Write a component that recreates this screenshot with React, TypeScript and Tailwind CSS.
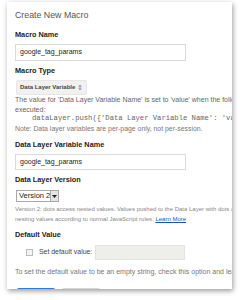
export default function App() {
  return (
    <div className="w-[240px] h-[300px] bg-white overflow-hidden font-['Liberation_Sans',Arial,sans-serif]">
      <div className="ml-[7px] mt-[2px] w-[225px] h-[287px] bg-white shadow-[1px_2px_5px_rgba(0,0,0,0.4)] overflow-hidden pl-[8px] text-[#333]">
        <div className="pt-[7px] text-[8.8px] leading-[12px] text-[#555]">Create New Macro</div>

        <div className="mt-[9px] text-[7.3px] font-bold leading-[10px] text-[#222]">Macro Name</div>
        <div className="mt-[4px] w-[171px] h-[17px] border border-[#d9d9d9] flex items-center px-[4px] text-[7px] text-[#222]">google_tag_params</div>

        <div className="mt-[5px] text-[7.3px] font-bold leading-[10px] text-[#222]">Macro Type</div>
        <div className="mt-[4px] ml-[1px] w-[71px] h-[15px] bg-[#f1f1f1] border border-[#e6e6e6] rounded-[2px] flex items-center justify-between px-[3px]">
          <span className="text-[6px] font-bold text-[#444] whitespace-nowrap">Data Layer Variable</span>
          <span className="text-[7px] leading-none text-[#777]">⇕</span>
        </div>
        <div className="text-[7px] leading-[9.5px] text-[#666] whitespace-nowrap">
          The value for 'Data Layer Variable Name' is set to 'value' when the following code is
        </div>
        <div className="text-[7px] leading-[9.5px] text-[#666]">executed:</div>
        <div className="pl-[17px] text-[7.2px] leading-[9.5px] text-[#666] whitespace-nowrap font-['Liberation_Mono',monospace]">
          dataLayer.push({"{"}'Data Layer Variable Name': 'value'{"}"});
        </div>
        <div className="text-[6.9px] leading-[9.5px] text-[#777] whitespace-nowrap">
          Note: Data layer variables are per-page only, not per-session.
        </div>

        <div className="mt-[7px] text-[7.3px] font-bold leading-[10px] text-[#222]">Data Layer Variable Name</div>
        <div className="mt-[4px] w-[171px] h-[16px] border border-[#d9d9d9] flex items-center px-[4px] text-[7px] text-[#222]">google_tag_params</div>

        <div className="mt-[5px] text-[7.3px] font-bold leading-[10px] text-[#222]">Data Layer Version</div>
        <div className="mt-[5px] ml-[1px] w-[43px] h-[12px] border border-[#a9a9a9] flex items-center">
          <span className="flex-1 pl-[2px] text-[7.5px] leading-none text-[#222] whitespace-nowrap">Version 2</span>
          <span className="w-[9px] h-[10px] bg-[#e4e4e4] border-l border-[#a9a9a9] flex items-center justify-center">
            <svg width="5" height="3" viewBox="0 0 5 3"><path d="M0 0h5L2.5 3z" fill="#222" /></svg>
          </span>
        </div>
        <div className="mt-[2px] text-[6px] leading-[10px] text-[#888] whitespace-nowrap">
          Version 2: dots access nested values. Values pushed to the Data Layer with dots are
        </div>
        <div className="text-[6px] leading-[10px] text-[#888] whitespace-nowrap">
          nesting values according to normal JavaScript rules. <span className="text-[#1155cc] underline">Learn More</span>
        </div>

        <div className="mt-[6px] text-[7.3px] font-bold leading-[10px] text-[#222]">Default Value</div>
        <div className="mt-[5px] h-[15px] flex items-center">
          <span className="ml-[11px] w-[7px] h-[7px] border border-[#bbb] bg-[#f3f3f3]" />
          <span className="ml-[6px] text-[6.9px] text-[#444] whitespace-nowrap">Set default value:</span>
          <span className="ml-[3px] w-[90px] h-[15px] bg-[#eeeeea] border border-[#e4e4de]" />
        </div>
        <div className="mt-[7px] text-[7px] leading-[10px] text-[#777] whitespace-nowrap">
          To set the default value to be an empty string, check this option and leave it blank.
        </div>

        <div className="mt-[11px] ml-[2px] flex gap-[7px]">
          <span className="w-[38px] h-[14px] bg-[#4d90fe] border-t border-[#3079ed] rounded-[2px]" />
          <span className="w-[38px] h-[14px] bg-[#f3f3f3] border-t border-[#d8d8d8] rounded-[2px]" />
        </div>
      </div>
    </div>
  );
}
